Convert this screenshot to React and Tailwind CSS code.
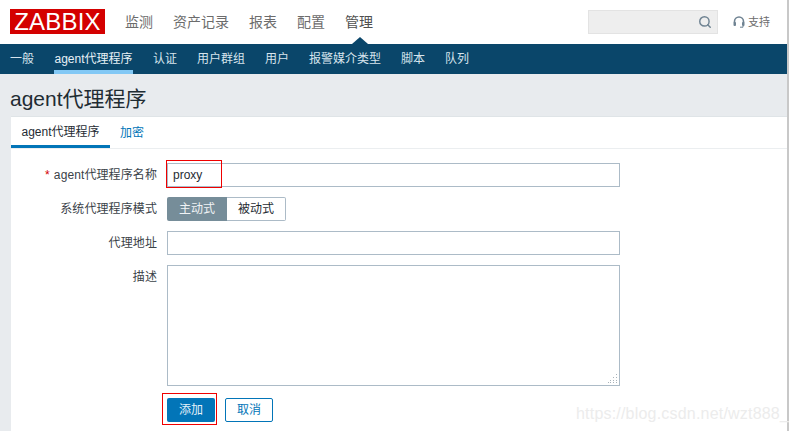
import { Search } from "lucide-react"

const FONT = "font-['Liberation_Sans','Noto_Sans_CJK_SC',sans-serif]"

const mainNav = ["监测", "资产记录", "报表", "配置", "管理"]
const subNav = ["一般", "agent代理程序", "认证", "用户群组", "用户", "报警媒介类型", "脚本", "队列"]

const SupportIcon = () => (
    <svg width="12" height="13" viewBox="0 0 12 13" fill="none" className="shrink-0">
        <path d="M1.5 7V5.5a4.5 4.5 0 0 1 9 0V7" stroke="#6f8392" strokeWidth="1.6" />
        <rect x="0.5" y="6" width="2.5" height="4" rx="1" fill="#6f8392" />
        <rect x="9" y="6" width="2.5" height="4" rx="1" fill="#6f8392" />
        <path d="M10 10v1.2H7" stroke="#6f8392" strokeWidth="1" />
    </svg>
)

const Header = () => (
    <div className="flex h-[44px] items-center bg-white pl-[10px] pr-[17px]">
        <div className="mb-[1px] flex h-[25px] w-[95px] items-center justify-center bg-[#d40000] text-[24px] leading-none tracking-[0.2px] text-white">
            ZABBIX
        </div>
        <nav className="ml-[20px] flex gap-[20px] text-[14px] text-[#6c6c6c]">
            {mainNav.map((item) => (
                <div key={item} className={item === "管理" ? "text-[#4f4f4f]" : ""}>
                    {item}
                </div>
            ))}
        </nav>
        <div className="ml-auto flex h-[24px] w-[130px] items-center justify-end border border-[#e3e3e3] bg-[#eeeeee] pr-[5px]">
            <Search size={14} strokeWidth={2.5} className="text-[#6f8392]" />
        </div>
        <div className="ml-[15px] flex w-[37px] items-center gap-[3px] whitespace-nowrap text-[11px] text-[#6c6c6c]">
            <SupportIcon />
            <span>支持</span>
        </div>
    </div>
)

const SubNav = () => (
    <div className="flex h-[30px] gap-[20px] bg-[#0a466a] pl-[10px] text-[12px] text-[#d6e4ed]">
        {subNav.map((item) => (
            <div
                key={item}
                className={
                    item === "agent代理程序"
                        ? "flex w-[79px] items-center justify-center border-b-[4px] border-[#82c8f5] pt-[4px] text-[#e8f1f7]"
                        : "flex items-center"
                }
            >
                {item}
            </div>
        ))}
    </div>
)

const Row = ({ label, required, children }) => (
    <div className="flex">
        <div className="flex h-[24px] w-[146px] shrink-0 items-center justify-end text-[12px] tracking-[0.1px] text-[#3a4248]">
            {required && <span className="mr-[4px] text-[#d40000]">*</span>}
            {label}
        </div>
        <div className="ml-[10px]">{children}</div>
    </div>
)

const Grip = () => (
    <svg className="absolute bottom-[1px] right-[1px]" width="10" height="10" viewBox="0 0 10 10">
        <g fill="#a9b3ba">
            <rect x="8" y="0" width="1" height="1" />
            <rect x="8" y="3" width="1" height="1" />
            <rect x="5" y="3" width="1" height="1" />
            <rect x="8" y="6" width="1" height="1" />
            <rect x="5" y="6" width="1" height="1" />
            <rect x="2" y="6" width="1" height="1" />
            <rect x="8" y="8" width="1" height="1" />
            <rect x="5" y="8" width="1" height="1" />
            <rect x="2" y="8" width="1" height="1" />
            <rect x="0" y="8" width="1" height="1" />
        </g>
    </svg>
)

const Form = () => (
    <div className="flex flex-col gap-[10px] pt-[14px]">
        <Row label="agent代理程序名称" required>
            <div className="flex h-[24px] w-[453px] items-center border border-[#acbbc7] bg-white pl-[5px] text-[12px] text-[#1f2c33]">
                proxy
            </div>
        </Row>
        <Row label="系统代理程序模式">
            <div className="flex h-[24px] text-[12px]">
                <div className="flex w-[60px] items-center justify-center rounded-l-[2px] bg-[#768d99] text-[#f0f3f5]">
                    主动式
                </div>
                <div className="flex w-[59px] items-center justify-center rounded-r-[2px] border border-l-0 border-[#acbbc7] text-[#1f2c33]">
                    被动式
                </div>
            </div>
        </Row>
        <Row label="代理地址">
            <div className="h-[24px] w-[453px] border border-[#acbbc7] bg-white" />
        </Row>
        <Row label="描述">
            <div className="relative h-[121px] w-[453px] border border-[#acbbc7] bg-white">
                <Grip />
            </div>
        </Row>
        <div className="ml-[156px] mt-[2px] flex gap-[10px] text-[12px]">
            <div className="flex h-[24px] w-[48px] items-center justify-center rounded-[2px] bg-[#0275b8] text-[#e4f1f9]">
                添加
            </div>
            <div className="flex h-[24px] w-[48px] items-center justify-center rounded-[2px] border border-[#0275b8] bg-white text-[#0275b8]">
                取消
            </div>
        </div>
    </div>
)

export default function App() {
    return (
        <div className={`relative flex h-[431px] w-[789px] overflow-hidden bg-white ${FONT}`}>
            <div className="flex min-w-0 flex-1 flex-col">
                <Header />
                <SubNav />
                <div className="flex flex-1 flex-col overflow-hidden bg-[#e8ebee]">
                    <h1 className="ml-[10px] flex h-[42px] shrink-0 items-center pt-[6px] text-[21px] font-normal leading-none text-[#1f2c33]">
                        agent代理程序
                    </h1>
                    <div className="ml-[11px] flex-1 border-t-[1px] border-[#dfe4e7] bg-white">
                        <div className="flex h-[32px] gap-[10px] border-b border-[#ebeef0] text-[12px]">
                            <div className="flex w-[99px] items-center justify-center border-t-[1px] border-b-[3px] border-t-transparent border-b-[#0275b8] text-[#1f2c33]">
                                agent代理程序
                            </div>
                            <div className="flex items-center text-[#0275b8]">加密</div>
                        </div>
                        <Form />
                    </div>
                </div>
            </div>
            <div className="w-[2px] shrink-0 bg-[#c8c8c8]" />

            {/* annotations lying over the page */}
            <div className="absolute left-[352px] top-[37px] h-0 w-0 border-x-[8px] border-b-[7px] border-x-transparent border-b-[#0a466a]" />
            <div className="absolute left-[166px] top-[160px] h-[28px] w-[56px] border border-[#f00000]" />
            <div className="absolute left-[162px] top-[393px] h-[32px] w-[55px] border border-[#f00000]" />
            <div className="absolute left-[576px] top-[402px] whitespace-nowrap text-[16px] leading-[24px] tracking-[0.2px] text-[#ececec]">
                https://blog.csdn.net/wzt888_
            </div>
        </div>
    )
}
